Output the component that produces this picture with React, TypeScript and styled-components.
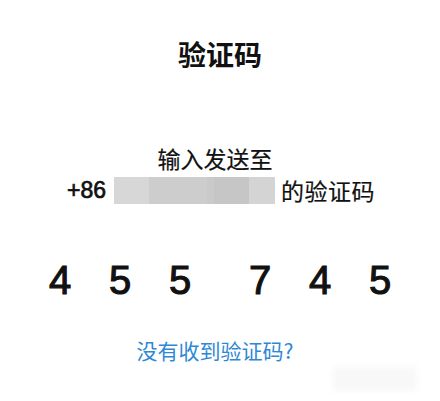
import React from "react";
import styled, { createGlobalStyle } from "styled-components";

const Global = createGlobalStyle`
  html, body { margin: 0; padding: 0; background: #ffffff; }
  body { font-family: "Liberation Sans", "Noto Sans CJK SC", sans-serif; }
`;

const Page = styled.div`
  position: relative;
  width: 440px;
  height: 401px;
  overflow: hidden;
  display: flex;
  flex-direction: column;
  align-items: center;
  background: #fff;
  color: #111;
`;

const Title = styled.h1`
  margin: 40px 0 0;
  font-family: "Noto Sans CJK SC", sans-serif;
  font-size: 28px;
  line-height: 28px;
  font-weight: 700;
  color: #111;
`;

const Prompt = styled.div`
  margin-top: 74px;
  padding-right: 10px;
  font-family: "Noto Sans CJK SC", sans-serif;
  font-size: 23px;
  line-height: 32px;
  color: #111;
  -webkit-text-stroke: 0.2px #111;
`;

const PhoneLine = styled.div`
  display: flex;
  align-items: center;
  height: 32px;
  padding-left: 2px;
  font-size: 23px;
  color: #111;
`;

const Code = styled.span`
  font-family: "Liberation Sans", sans-serif;
  font-size: 23px;
  margin-right: 8px;
  -webkit-text-stroke: 0.7px #111;
`;

const Suffix = styled.span`
  font-family: "Noto Sans CJK SC", sans-serif;
  margin-left: 6px;
  letter-spacing: 0.5px;
  -webkit-text-stroke: 0.2px #111;
`;

const Blur = styled.div`
  display: flex;
  width: 161px;
  height: 27px;
`;

const BlurSeg = styled.div<{ $w: number; $c: string }>`
  width: ${(p) => p.$w}px;
  height: 100%;
  background: ${(p) => p.$c};
`;

const Digits = styled.div`
  margin-top: 54px;
  display: flex;
  gap: 20px;
`;

const Group = styled.div`
  display: flex;
`;

const Digit = styled.span`
  width: 60px;
  text-align: center;
  font-family: "Liberation Sans", sans-serif;
  font-size: 40px;
  line-height: 40px;
  color: #111;
  -webkit-text-stroke: 1.1px #111;
`;

const Link = styled.a`
  margin-top: 36px;
  padding-right: 10px;
  font-family: "Noto Sans CJK SC", sans-serif;
  font-size: 21px;
  line-height: 28px;
  color: #2f88d4;
  text-decoration: none;
`;

const Watermark = styled.div`
  position: absolute;
  left: 333px;
  top: 367px;
  width: 84px;
  height: 24px;
  background: #f8f8f8;
  filter: blur(3px);
`;

const segs = [
  { w: 35, c: "#d7d7d7" },
  { w: 58, c: "#cdcdcd" },
  { w: 7, c: "#cacaca" },
  { w: 35, c: "#c6c6c6" },
  { w: 26, c: "#d4d4d4" },
];

export default function App() {
  const a = ["4", "5", "5"];
  const b = ["7", "4", "5"];
  return (
    <>
      <Global />
      <Page>
        <Title>验证码</Title>
        <Prompt>输入发送至</Prompt>
        <PhoneLine>
          <Code>+86</Code>
          <Blur>
            {segs.map((s, i) => (
              <BlurSeg key={i} $w={s.w} $c={s.c} />
            ))}
          </Blur>
          <Suffix>的验证码</Suffix>
        </PhoneLine>
        <Digits>
          <Group>
            {a.map((d, i) => (
              <Digit key={i}>{d}</Digit>
            ))}
          </Group>
          <Group>
            {b.map((d, i) => (
              <Digit key={i}>{d}</Digit>
            ))}
          </Group>
        </Digits>
        <Link href="#">没有收到验证码?</Link>
        <Watermark />
      </Page>
    </>
  );
}
